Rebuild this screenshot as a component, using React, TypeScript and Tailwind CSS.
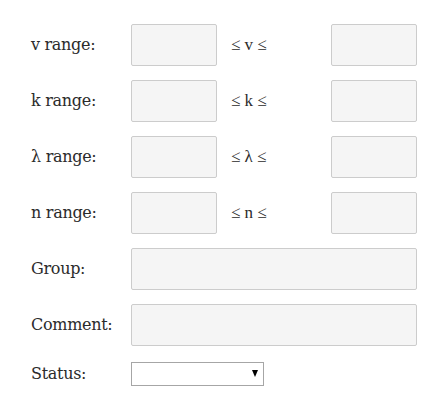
import React from "react";

const box = "h-[42px] border border-[#cccccc] bg-[#f5f5f5] rounded-[2px] outline-none";
const label = "w-[100px] text-[16px] tracking-[-0.3px]";

function RangeRow({ name, sym }: { name: string; sym: string }) {
  return (
    <div className="flex items-center h-[42px]">
      <div className={label}>{name}</div>
      <input className={`${box} w-[86px]`} />
      <div className="w-[114px] pl-[14px] text-[17px] font-['Liberation_Serif',serif]">
        ≤ {sym} ≤
      </div>
      <input className={`${box} w-[86px]`} />
    </div>
  );
}

export default function App() {
  return (
    <div className="w-[435px] h-[416px] bg-white text-[#2b2b2b] font-['DejaVu_Serif',serif] pl-[31px] pt-[24px]">
      <div className="flex flex-col gap-[14px]">
        <RangeRow name="v range:" sym="v" />
        <RangeRow name="k range:" sym="k" />
        <RangeRow name="λ range:" sym="λ" />
        <RangeRow name="n range:" sym="n" />
        <div className="flex items-center h-[42px]">
          <div className={label}>Group:</div>
          <input className={`${box} w-[286px]`} />
        </div>
        <div className="flex items-center h-[42px]">
          <div className={label}>Comment:</div>
          <input className={`${box} w-[286px]`} />
        </div>
        <div className="flex items-center h-[24px] mt-[2px]">
          <div className={label}>Status:</div>
          <div className="relative w-[133px] h-[24px] border border-[#a6a6a6] bg-white">
            <select className="w-full h-full appearance-none bg-transparent outline-none" />
            <span className="absolute right-[5px] top-[7px] w-0 h-0 border-l-[3.5px] border-r-[3.5px] border-t-[7px] border-l-transparent border-r-transparent border-t-black" />
          </div>
        </div>
      </div>
    </div>
  );
}
